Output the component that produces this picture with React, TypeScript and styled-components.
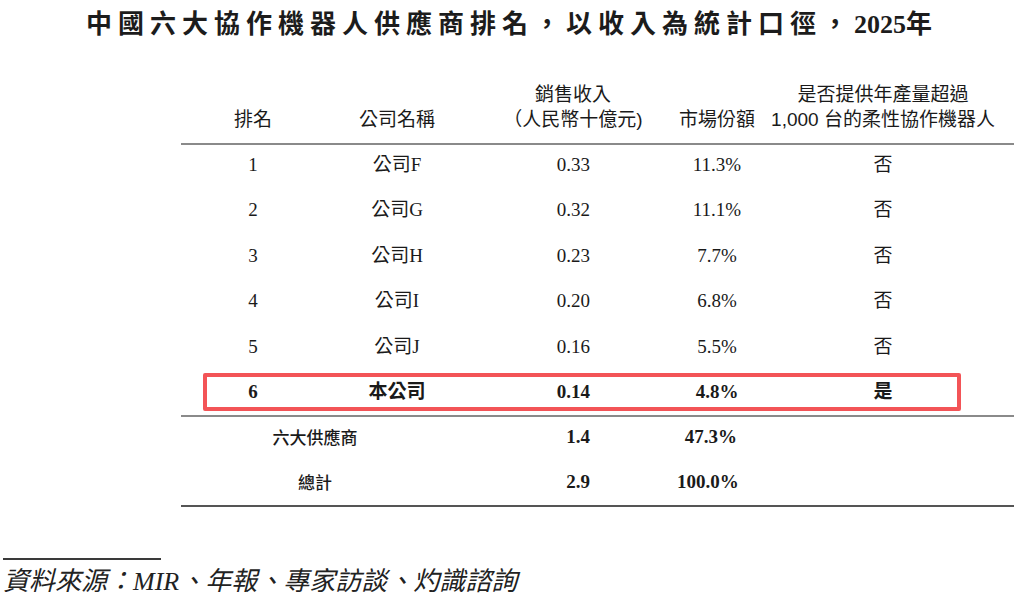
import React from "react";
import styled, { createGlobalStyle, css } from "styled-components";

const GlobalStyle = createGlobalStyle`
  html, body { margin: 0; padding: 0; background: #ffffff; }
  body { width: 1014px; height: 616px; overflow: hidden; color: #1a1a1a; }
`;

const COLS = "144px 144px 208px 80px 252px";

const Page = styled.div`
  width: 1014px;
  height: 616px;
  display: flex;
  flex-direction: column;
`;

const Title = styled.h1`
  margin: 0;
  padding-top: 8px;
  padding-left: 10px;
  height: 34px;
  line-height: 34px;
  text-align: center;
  font-family: "Liberation Serif", "Noto Sans CJK TC", serif;
  font-size: 26px;
  font-weight: 700;
  letter-spacing: 6px;
  color: #1c1c1c;
`;

const Year = styled.span`
  letter-spacing: 0;
`;

const Table = styled.div`
  margin-left: 181px;
  margin-top: 40px;
  width: 833px;
  display: flex;
  flex-direction: column;
`;

const HeaderRow = styled.div`
  display: grid;
  grid-template-columns: ${COLS};
  align-items: end;
  padding-bottom: 11px;
  font-family: "Liberation Sans", "Noto Sans CJK TC", sans-serif;
  font-size: 19px;
  line-height: 25px;
  color: #1a1a1a;
`;

const HeaderCell = styled.div`
  text-align: center;
  white-space: nowrap;
`;

const Rule = styled.div<{ $color: string }>`
  height: 2px;
  background: ${(p) => p.$color};
`;

const Row = styled.div<{ $height: number; $bold?: boolean; $highlight?: boolean }>`
  position: relative;
  display: grid;
  grid-template-columns: ${COLS};
  align-items: center;
  box-sizing: border-box;
  height: ${(p) => p.$height}px;
  padding-bottom: ${(p) => p.$height - 40}px;
  font-family: "Liberation Serif", "Noto Sans CJK TC", serif;
  font-size: 19px;
  line-height: 24px;
  font-weight: ${(p) => (p.$bold ? 700 : 400)};
  color: #1a1a1a;
  ${(p) =>
    p.$highlight &&
    css`
      &::after {
        content: "";
        position: absolute;
        left: 22px;
        top: 1px;
        width: 758px;
        height: 38px;
        box-sizing: border-box;
        border: 4px solid #f35457;
        border-radius: 2px;
        pointer-events: none;
      }
    `}
`;

const Cell = styled.div<{ $align?: "center" | "right"; $pr?: number; $span?: number }>`
  text-align: ${(p) => p.$align ?? "center"};
  padding-right: ${(p) => p.$pr ?? 0}px;
  white-space: nowrap;
  ${(p) => p.$span && css`grid-column: span ${p.$span};`}
`;

const Label = styled(Cell)`
  font-family: "Noto Sans CJK TC", sans-serif;
  font-size: 17px;
  font-weight: 500;
`;

const FootRule = styled.div`
  margin-top: 51px;
  margin-left: 3px;
  width: 158px;
  height: 2px;
  background: #3a3a3a;
`;

const Footnote = styled.div`
  margin-left: 3px;
  margin-top: 6px;
  font-family: "Liberation Serif", "Noto Sans CJK TC", serif;
  font-style: italic;
  font-size: 26px;
  line-height: 32px;
  color: #222;
  white-space: nowrap;
`;

type R = { rank: string; name: string; rev: string; share: string; flag: string };

const rows: R[] = [
  { rank: "1", name: "公司F", rev: "0.33", share: "11.3%", flag: "否" },
  { rank: "2", name: "公司G", rev: "0.32", share: "11.1%", flag: "否" },
  { rank: "3", name: "公司H", rev: "0.23", share: "7.7%", flag: "否" },
  { rank: "4", name: "公司I", rev: "0.20", share: "6.8%", flag: "否" },
  { rank: "5", name: "公司J", rev: "0.16", share: "5.5%", flag: "否" },
];

export default function App() {
  return (
    <Page>
      <GlobalStyle />
      <Title>
        中國六大協作機器人供應商排名，以收入為統計口徑，<Year>2025</Year>年
      </Title>
      <Table>
        <HeaderRow>
          <HeaderCell>排名</HeaderCell>
          <HeaderCell>公司名稱</HeaderCell>
          <HeaderCell>
            銷售收入
            <br />
            （人民幣十億元)
          </HeaderCell>
          <HeaderCell>市場份額</HeaderCell>
          <HeaderCell>
            是否提供年產量超過
            <br />
            1,000 台的柔性協作機器人
          </HeaderCell>
        </HeaderRow>
        <Rule $color="#8a8a8a" />
        {rows.map((r) => (
          <Row key={r.rank} $height={45.4}>
            <Cell>{r.rank}</Cell>
            <Cell>{r.name}</Cell>
            <Cell $align="right" $pr={87}>{r.rev}</Cell>
            <Cell>{r.share}</Cell>
            <Cell>{r.flag}</Cell>
          </Row>
        ))}
        <Row $height={43} $bold $highlight>
          <Cell>6</Cell>
          <Cell>本公司</Cell>
          <Cell $align="right" $pr={87}>0.14</Cell>
          <Cell>4.8%</Cell>
          <Cell>是</Cell>
        </Row>
        <Rule $color="#8a8a8a" />
        <Row $height={45}>
          <Label $span={2} $pr={20}>六大供應商</Label>
          <Cell $align="right" $pr={87}><b>1.4</b></Cell>
          <Cell $align="right" $pr={20}><b>47.3%</b></Cell>
          <Cell />
        </Row>
        <Row $height={43}>
          <Label $span={2} $pr={20}>總計</Label>
          <Cell $align="right" $pr={87}><b>2.9</b></Cell>
          <Cell $align="right" $pr={20}><b>100.0%</b></Cell>
          <Cell />
        </Row>
        <Rule $color="#555555" />
      </Table>
      <FootRule />
      <Footnote>資料來源：MIR、年報、專家訪談、灼識諮詢</Footnote>
    </Page>
  );
}
